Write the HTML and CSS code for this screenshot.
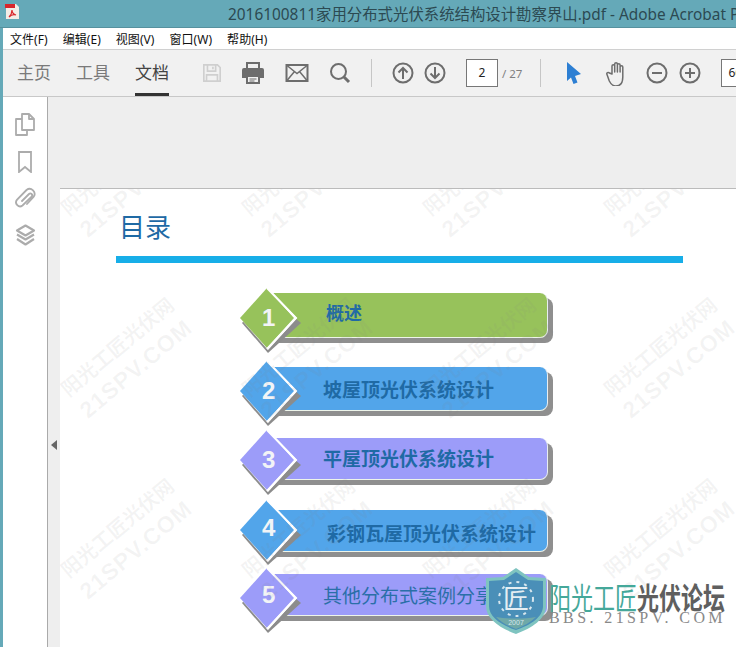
FILE: index.html
```html
<!DOCTYPE html>
<html lang="zh-CN">
<head>
    <meta charset="UTF-8">
    <meta name="viewport" content="width=device-width, initial-scale=1.0">
    <title>Adobe Acrobat</title>
    <link rel="stylesheet" href="styles.css">
</head>
<body>
    <svg class="defs" width="0" height="0">
        <symbol id="diamond" viewBox="0 0 64 68">
            <polygon points="29,66 3,36 29,8 62,36" fill="#8c8c8c"/>
            <polygon points="29,63 1,31 29,1 58,31" fill="#fff"/>
            <polygon points="28,61 1,31 28,1 55,31" fill="currentColor"/>
            <polyline points="28,1 57,31 28,62" fill="none" stroke="#fff" stroke-width="2"/>
        </symbol>
    </svg>

    <header class="titlebar">
        <svg class="app-icon" width="16" height="17" viewBox="0 0 16 17">
            <path d="M2 1h10l3 3v12H2z" fill="#f3ece6"/>
            <path d="M1 1h10v4H1z" fill="#d8262c"/>
            <path d="M5 14c2-2 3-5 3-7 0 3 1 4 4 5-3-1-5 0-7 2z" fill="none" stroke="#d8262c" stroke-width="1.2"/>
        </svg>
        <div class="doc-title">2016100811家用分布式光伏系统结构设计勘察界山.pdf - Adobe Acrobat Pro DC</div>
    </header>

    <div class="window-body">
        <nav class="menubar">
            <span>文件(F)</span>
            <span>编辑(E)</span>
            <span>视图(V)</span>
            <span>窗口(W)</span>
            <span>帮助(H)</span>
        </nav>

        <div class="toolbar">
            <a class="tab">主页</a>
            <a class="tab">工具</a>
            <a class="tab tab-active">文档</a>

            <div class="tool-group tools-file">
                <svg class="tool tool-save" width="20" height="20" viewBox="0 0 22 22" fill="none" stroke="#cfcfcf" stroke-width="1.8">
                    <path d="M2 2h15l3 3v15H2z"/>
                    <path d="M6 2v7h9V2M12 4v3M5 20v-7h12v7"/>
                </svg>
                <svg class="tool" width="24" height="22" viewBox="0 0 24 22">
                    <path d="M6 1h12v6H6z" fill="none" stroke="#6d6d6d" stroke-width="2"/>
                    <path d="M3 6h18a2 2 0 0 1 2 2v8h-4v-3H5v3H1V8a2 2 0 0 1 2-2z" fill="#6d6d6d"/>
                    <path d="M6 14h12v7H6z" fill="none" stroke="#6d6d6d" stroke-width="2"/>
                    <path d="M8.500 17h7M8.500 19h5" stroke="#6d6d6d"/>
                </svg>
                <svg class="tool" width="24" height="20" viewBox="0 0 24 20" fill="none" stroke="#6d6d6d" stroke-width="2">
                    <path d="M1.500 2h21v16h-21z"/>
                    <path d="M2 2.500l10 8 10-8M2 17.500l7.500-9M22 17.500l-7.500-9" stroke-width="1.500"/>
                </svg>
                <svg class="tool" width="22" height="22" viewBox="0 0 22 22" fill="none" stroke="#6d6d6d">
                    <circle cx="9.500" cy="9.500" r="7.500" stroke-width="2"/>
                    <path d="M15 15l5 5" stroke-width="3"/>
                </svg>
            </div>

            <i class="separator sep-nav"></i>

            <div class="tool-group tools-nav">
                <svg width="22" height="22" viewBox="0 0 22 22" fill="none" stroke="#6d6d6d" stroke-width="2">
                    <circle cx="11" cy="11" r="9.500"/>
                    <path d="M11 17V6M6.500 10.500L11 6l4.500 4.500"/>
                </svg>
                <svg width="22" height="22" viewBox="0 0 22 22" fill="none" stroke="#6d6d6d" stroke-width="2">
                    <circle cx="11" cy="11" r="9.500"/>
                    <path d="M11 5v11M6.500 11.500L11 16l4.500-4.500"/>
                </svg>
            </div>

            <div class="page-box">2</div>
            <span class="page-count">/ 27</span>

            <i class="separator sep-view"></i>

            <svg class="cursor-icon" width="16" height="24" viewBox="0 0 16 24">
                <path d="M1 1l14 12-6 2 2.500 6.500L7.500 23 5 16.500 1 20z" fill="#2d7fd3"/>
            </svg>
            <svg class="hand-icon" width="24" height="25" viewBox="0 0 24 25" fill="none" stroke="#6d6d6d" stroke-width="1.500" stroke-linejoin="round">
                <path d="M7 13V5a1.300 1.300 0 0 1 2.700 0v6-8a1.300 1.300 0 0 1 2.700 0v8-7a1.300 1.300 0 0 1 2.700 0v7-5a1.300 1.300 0 0 1 2.700 0v10c0 6-3 9-7 9-3.500 0-5-2-6.500-5L2 13.500c-.8-1.600 1.200-2.800 2.400-1.500z"/>
            </svg>
            <div class="tool-group tools-zoom">
                <svg width="22" height="22" viewBox="0 0 22 22" fill="none" stroke="#6d6d6d" stroke-width="2">
                    <circle cx="11" cy="11" r="9.500"/>
                    <path d="M6 11h10"/>
                </svg>
                <svg width="22" height="22" viewBox="0 0 22 22" fill="none" stroke="#6d6d6d" stroke-width="2">
                    <circle cx="11" cy="11" r="9.500"/>
                    <path d="M6 11h10M11 6v10"/>
                </svg>
            </div>
            <div class="zoom-box">66.7%</div>
        </div>

        <main class="workspace">
            <aside class="side-rail">
                <svg width="20" height="23" viewBox="0 0 20 23" fill="none" stroke="#acacac" stroke-width="1.800" stroke-linejoin="round">
                    <path d="M7 1h7l5 5v11H7z"/>
                    <path d="M14 1v5h5M7 6H1v16h11v-5"/>
                </svg>
                <svg width="14" height="22" viewBox="0 0 14 22" fill="none" stroke="#acacac" stroke-width="1.800">
                    <path d="M1 1h12v20l-6-5-6 5z"/>
                </svg>
                <svg width="21" height="21" viewBox="0 0 21 21" fill="none" stroke="#acacac" stroke-width="1.800" stroke-linecap="round">
                    <path d="M7 14l7-7a1.800 1.800 0 0 1 2.600 2.600L7.500 18.500a4 4 0 0 1-5.600-5.600L11.500 3a5 5 0 0 1 7 7L12 17"/>
                </svg>
                <svg width="21" height="22" viewBox="0 0 21 22" fill="none" stroke="#acacac" stroke-width="2.200" stroke-linejoin="round">
                    <path d="M10.500 1.500l8.500 5-8.500 5-8.500-5z"/>
                    <path d="M2 10.500l8.500 5 8.500-5M2 15l8.500 5.500L19 15"/>
                </svg>
            </aside>

            <div class="gutter">
                <i class="collapse-arrow"></i>
            </div>

            <div class="viewer">
                <section class="page">
                    <h1 class="slide-title">目录</h1>
                    <div class="slide-rule"></div>

                    <ol class="toc">
                        <li class="toc-item toc-first green">
                            <svg class="diamond"><use href="#diamond"/></svg>
                            <b class="num">1</b>
                            <span class="label label-short">概述</span>
                        </li>
                        <li class="toc-item toc-second blue">
                            <svg class="diamond"><use href="#diamond"/></svg>
                            <b class="num">2</b>
                            <span class="label">坡屋顶光伏系统设计</span>
                        </li>
                        <li class="toc-item toc-third purple">
                            <svg class="diamond"><use href="#diamond"/></svg>
                            <b class="num">3</b>
                            <span class="label label-flat">平屋顶光伏系统设计</span>
                        </li>
                        <li class="toc-item toc-fourth blue">
                            <svg class="diamond"><use href="#diamond"/></svg>
                            <b class="num">4</b>
                            <span class="label label-long">彩钢瓦屋顶光伏系统设计</span>
                        </li>
                        <li class="toc-item toc-fifth purple">
                            <svg class="diamond"><use href="#diamond"/></svg>
                            <b class="num">5</b>
                            <span class="label label-plain">其他分布式案例分享</span>
                        </li>
                    </ol>

                    <div class="watermarks">
                        <div class="mark"><span>阳光工匠光伏网</span><span>21SPV.COM</span></div>
                        <div class="mark"><span>阳光工匠光伏网</span><span>21SPV.COM</span></div>
                        <div class="mark"><span>阳光工匠光伏网</span><span>21SPV.COM</span></div>
                        <div class="mark"><span>阳光工匠光伏网</span><span>21SPV.COM</span></div>
                        <div class="mark"><span>阳光工匠光伏网</span><span>21SPV.COM</span></div>
                        <div class="mark"><span>阳光工匠光伏网</span><span>21SPV.COM</span></div>
                        <div class="mark"><span>阳光工匠光伏网</span><span>21SPV.COM</span></div>
                        <div class="mark"><span>阳光工匠光伏网</span><span>21SPV.COM</span></div>
                        <div class="mark"><span>阳光工匠光伏网</span><span>21SPV.COM</span></div>
                        <div class="mark"><span>阳光工匠光伏网</span><span>21SPV.COM</span></div>
                        <div class="mark"><span>阳光工匠光伏网</span><span>21SPV.COM</span></div>
                        <div class="mark"><span>阳光工匠光伏网</span><span>21SPV.COM</span></div>
                    </div>
                </section>
            </div>
        </main>
    </div>

    <!-- site stamp over the screenshot -->
    <div class="stamp">
        <svg class="shield" width="62" height="66" viewBox="0 0 62 66">
            <path d="M31 0l13 9 17 1v28c0 13-14 22-30 28C15 60 1 51 1 38V10l17-1z" fill="#7fc4c0"/>
            <path d="M31 4l12 8 15 1v25c0 11-12 19-27 24C16 57 4 49 4 38V13l15-1z" fill="#4a8fb8"/>
            <path d="M11 49c12 2 28 2 40 0-5 5-12 9-20 12-8-3-15-7-20-12z" fill="#6fa9a8"/>
            <circle cx="31" cy="31" r="17" fill="none" stroke="#d6e6ee" stroke-width="2" stroke-dasharray="3 5"/>
            <text class="shield-glyph" x="31" y="40" text-anchor="middle">匠</text>
            <text class="shield-year" x="31" y="57" text-anchor="middle">2007</text>
        </svg>
        <div class="stamp-text">
            <div class="stamp-name"><span class="stamp-teal">阳光工匠</span><span class="stamp-gray">光伏论坛</span></div>
            <div class="stamp-url">BBS. 21SPV. COM</div>
        </div>
    </div>
</body>
</html>
```

FILE: styles.css
```css
* {
    box-sizing: border-box;
}

html, body {
    height: 100%;
}

body {
    margin: 0;
    overflow: hidden;
    position: relative;
    display: flex;
    flex-direction: column;
    background-color: #65a9b8;
    font-family: "Noto Sans", "Noto Sans CJK SC", sans-serif;
    color: #222222;
}

.defs {
    position: absolute;
}

/* title bar */
.titlebar {
    height: 28px;
    flex: none;
    display: flex;
    align-items: center;
    padding-left: 4px;
    border-bottom: 1px solid #56919e;
    background-color: #65a9b8;
}

.app-icon {
    flex: none;
    margin-top: -4px;
}

.doc-title {
    margin-left: 208px;
    white-space: nowrap;
    font-size: 15.4px;
    color: #2c4a52;
}

/* everything below the title bar */
.window-body {
    flex: 1;
    min-height: 0;
    margin-left: 3px;
    display: flex;
    flex-direction: column;
    background-color: #ffffff;
}

.menubar {
    height: 21px;
    flex: none;
    display: flex;
    align-items: center;
    gap: 15px;
    padding-left: 7px;
    background-color: #ffffff;
    font-size: 12px;
    letter-spacing: 0.05px;
    color: #111111;
}

.toolbar {
    height: 48px;
    flex: none;
    display: flex;
    align-items: center;
    padding-left: 14px;
    border-top: 1px solid #d0d0d0;
    border-bottom: 1px solid #c8c8c8;
    background-color: #f1f1f1;
    white-space: nowrap;
}

.tab {
    height: 46px;
    margin-right: 25px;
    padding-top: 11px;
    font-size: 17px;
    line-height: 24px;
    color: #7a7a7a;
}

.tab-active {
    color: #444444;
    border-bottom: 3px solid #333333;
}

.tool-group {
    display: flex;
    align-items: center;
    flex: none;
}

.tools-file {
    margin-left: 8px;
    gap: 20px;
}

.tool-save {
    margin-right: -1px;
}

.tools-nav {
    gap: 10px;
    margin-left: 20px;
}

.tools-zoom {
    gap: 11px;
    margin-left: 17px;
}

.separator {
    width: 1px;
    height: 28px;
    flex: none;
    background-color: #c6c6c6;
}

.sep-nav {
    margin-left: 20px;
}

.sep-view {
    margin-left: 18px;
}

.page-box,
.zoom-box {
    height: 28px;
    flex: none;
    border: 1px solid #777777;
    background-color: #ffffff;
    font-size: 12px;
    line-height: 26px;
}

.page-box {
    width: 32px;
    margin-left: 20px;
    text-align: center;
}

.zoom-box {
    width: 50px;
    margin-left: 20px;
    padding-left: 6px;
}

.page-count {
    margin-left: 4px;
    font-size: 11.5px;
    color: #808080;
}

.cursor-icon {
    flex: none;
    margin-left: 25px;
}

.hand-icon {
    flex: none;
    margin-left: 23px;
}

/* document area */
.workspace {
    flex: 1;
    min-height: 0;
    display: flex;
}

.side-rail {
    width: 45px;
    flex: none;
    display: flex;
    flex-direction: column;
    align-items: center;
    padding-top: 16px;
    gap: 15px;
    border-right: 1px solid #aaaaaa;
    background-color: #ffffff;
}

.side-rail svg:nth-child(4) {
    margin-top: 1px;
}

.side-rail svg:nth-child(3) {
    margin-top: -1px;
}

.gutter {
    width: 12px;
    flex: none;
    display: flex;
    align-items: center;
    padding-left: 3px;
    background-color: #eeeeee;
}

.collapse-arrow {
    width: 0;
    height: 0;
    margin-top: 145px;
    border-top: 5px solid transparent;
    border-bottom: 5px solid transparent;
    border-right: 6px solid #666666;
}

.viewer {
    flex: 1;
    min-width: 0;
    padding-top: 91px;
    background-color: #eeeeee;
    overflow: hidden;
}

.page {
    position: relative;
    height: 100%;
    min-height: 460px;
    overflow: hidden;
    padding-top: 1px;
    border-top: 1px solid #bbbbbb;
    background-color: #ffffff;
}

.slide-title {
    margin: 18px 0 0 59px;
    font-size: 26px;
    font-weight: normal;
    line-height: 38px;
    color: #1f6aa5;
}

.slide-rule {
    width: 567px;
    height: 7px;
    margin: 10px 0 0 56px;
    background-color: #17aee8;
}

/* table of contents on the slide */
.toc {
    list-style: none;
    margin: 30px 0 0 210px;
    padding: 0;
    width: 278px;
}

.toc-item {
    position: relative;
    height: 42px;
    display: flex;
    align-items: center;
    border-radius: 0 8px 8px 0;
    border-bottom: 1.500px solid #eef5ea;
    border-right: 1px solid #e8eef2;
    box-shadow: 5px 5px 0 #8f8f8f;
}

.toc-first {
    height: 45px;
}

.toc-second {
    height: 44px;
    margin-top: 29px;
}

.toc-third {
    margin-top: 27px;
}

.toc-fourth {
    margin-top: 30px;
}

.toc-fifth {
    margin-top: 22px;
}

.green {
    background-color: #97c25b;
    color: #97c25b;
}

.blue {
    background-color: #52a5ea;
    color: #52a5ea;
}

.purple {
    background-color: #9c9cf9;
    color: #9c9cf9;
}

.diamond {
    position: absolute;
    left: -31px;
    top: -6px;
    width: 64px;
    height: 68px;
}

.toc-second .diamond {
    top: -7px;
}

.toc-third .diamond {
    top: -9px;
}

.toc-fourth .diamond {
    top: -11px;
}

.toc-fifth .diamond {
    top: -7px;
}

.num {
    position: absolute;
    left: -8px;
    top: 11px;
    font-family: "Liberation Sans", Arial, sans-serif;
    font-size: 24px;
    line-height: 28px;
    font-weight: bold;
    color: #f2f4f6;
}

.toc-second .num {
    top: 10px;
}

.toc-third .num {
    top: 8px;
}

.toc-fourth .num {
    top: 4px;
}

.toc-fifth .num {
    top: 7px;
}

.label {
    padding-left: 53px;
    font-size: 19px;
    font-weight: bold;
    color: #1f6aa5;
    line-height: 24px;
    position: relative;
    top: 1px;
}

.label-short {
    padding-left: 56px;
    font-size: 18px;
    top: -2px;
}

.label-flat {
    top: 0;
}

.label-long {
    padding-left: 57px;
    top: 3px;
}

.label-plain {
    font-weight: normal;
    color: #2a6fa8;
    top: 1px;
}

/* watermark sits over the slide */
.watermarks {
    position: absolute;
    left: -24px;
    top: -103px;
    display: grid;
    grid-template-columns: repeat(4, 181px);
    grid-auto-rows: 181px;
    pointer-events: none;
}

.mark {
    display: flex;
    flex-direction: column;
    align-items: center;
    justify-content: center;
    transform: rotate(-40deg);
    color: rgba(130, 130, 130, 0.09);
    font-weight: bold;
    white-space: nowrap;
}

.mark span:first-child {
    font-size: 20px;
    line-height: 28px;
}

.mark span:last-child {
    font-family: "Liberation Sans", Arial, sans-serif;
    font-size: 23px;
    line-height: 28px;
    letter-spacing: 1px;
}

/* site stamp */
.stamp {
    position: absolute;
    left: 485px;
    top: 568px;
    display: flex;
}

.shield {
    flex: none;
}

.shield-glyph {
    font-size: 26px;
    fill: #e4eef3;
}

.shield-year {
    font-family: "Liberation Sans", Arial, sans-serif;
    font-size: 7px;
    fill: #d6e6ee;
}

.stamp-text {
    padding-top: 7px;
    margin-left: 2px;
}

.stamp-name {
    font-size: 22px;
    line-height: 22px;
    white-space: nowrap;
    transform: scaleY(1.35);
    transform-origin: top left;
    margin-top: 7px;
}

.stamp-teal {
    color: #45a89a;
}

.stamp-gray {
    color: #5f5f5f;
    font-weight: bold;
}

.stamp-url {
    margin-top: 8px;
    font-family: "Liberation Serif", serif;
    font-size: 16px;
    line-height: 12px;
    letter-spacing: 3.4px;
    color: #888888;
    white-space: nowrap;
}
```
